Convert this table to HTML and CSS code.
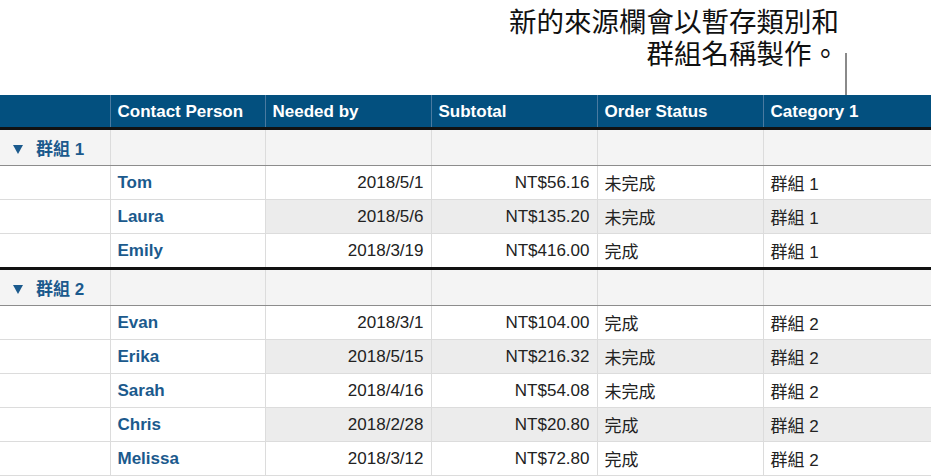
FILE: index.html
```html
<!DOCTYPE html>
<html lang="zh-Hant">

<head>
    <meta charset="UTF-8">
    <meta name="viewport" content="width=device-width, initial-scale=1.0">
    <title>分類表格</title>
    <link rel="stylesheet" href="styles.css">
</head>

<body>
    <div class="callout">
        <p class="callout-text">新的來源欄會以暫存類別和<br>群組名稱製作。</p>
        <div class="callout-line"></div>
    </div>

    <table class="orders">
        <colgroup>
            <col class="col-group">
            <col class="col-contact">
            <col class="col-date">
            <col class="col-subtotal">
            <col class="col-status">
            <col class="col-category">
        </colgroup>
        <thead>
            <tr>
                <th></th>
                <th>Contact Person</th>
                <th>Needed by</th>
                <th>Subtotal</th>
                <th>Order Status</th>
                <th>Category 1</th>
            </tr>
        </thead>
        <tbody>
            <tr class="group-row">
                <td class="group-label"><span class="arrow"></span>群組 1</td>
                <td></td><td></td><td></td><td></td><td></td>
            </tr>
            <tr>
                <td></td><td class="name">Tom</td><td class="num">2018/5/1</td><td class="num">NT$56.16</td><td>未完成</td><td>群組 1</td>
            </tr>
            <tr class="alt">
                <td></td><td class="name">Laura</td><td class="num">2018/5/6</td><td class="num">NT$135.20</td><td>未完成</td><td>群組 1</td>
            </tr>
            <tr class="last">
                <td></td><td class="name">Emily</td><td class="num">2018/3/19</td><td class="num">NT$416.00</td><td>完成</td><td>群組 1</td>
            </tr>
            <tr class="group-row">
                <td class="group-label"><span class="arrow"></span>群組 2</td>
                <td></td><td></td><td></td><td></td><td></td>
            </tr>
            <tr>
                <td></td><td class="name">Evan</td><td class="num">2018/3/1</td><td class="num">NT$104.00</td><td>完成</td><td>群組 2</td>
            </tr>
            <tr class="alt">
                <td></td><td class="name">Erika</td><td class="num">2018/5/15</td><td class="num">NT$216.32</td><td>未完成</td><td>群組 2</td>
            </tr>
            <tr>
                <td></td><td class="name">Sarah</td><td class="num">2018/4/16</td><td class="num">NT$54.08</td><td>未完成</td><td>群組 2</td>
            </tr>
            <tr class="alt">
                <td></td><td class="name">Chris</td><td class="num">2018/2/28</td><td class="num">NT$20.80</td><td>完成</td><td>群組 2</td>
            </tr>
            <tr>
                <td></td><td class="name">Melissa</td><td class="num">2018/3/12</td><td class="num">NT$72.80</td><td>完成</td><td>群組 2</td>
            </tr>
        </tbody>
    </table>
</body>

</html>
```

FILE: styles.css
```css
body {
    margin: 0;
    background-color: #fff;
    font-family: "Liberation Sans", "Noto Sans CJK TC", sans-serif;
    color: #222;
}

/* annotation above the table */
.callout {
    position: relative;
    height: 95px;
}

.callout-text {
    margin: 0;
    width: 839px;
    padding-top: 4px;
    text-align: right;
    font-family: "Noto Sans CJK TC", sans-serif;
    font-size: 27.5px;
    line-height: 32px;
    color: #111;
}

.callout-line {
    position: absolute;
    left: 845px;
    top: 53px;
    width: 2px;
    height: 42px;
    background-color: #8a8a8a;
}

/* table */
.orders {
    border-collapse: collapse;
    table-layout: fixed;
    width: 931px;
    font-size: 17px;
}

.col-group { width: 110px; }
.col-contact { width: 155px; }
.col-date { width: 166px; }
.col-subtotal { width: 166px; }
.col-status { width: 166px; }
.col-category { width: 168px; }

.orders th,
.orders td {
    padding: 0 7px;
    text-align: left;
    white-space: nowrap;
}

.orders th {
    height: 30px;
    padding-top: 2px;
    background-color: #03507f;
    color: #fff;
    font-weight: bold;
    border-left: 1px solid #4a7aa0;
    border-bottom: 3px solid #111;
}

.orders th:first-child {
    border-left: none;
}

.orders td {
    height: 33px;
    border-left: 1px solid #dcdcdc;
    border-bottom: 1px solid #dcdcdc;
}

.orders td:first-child {
    border-left: none;
}

.orders tr.alt td:nth-child(n+3) {
    background-color: #ececec;
}

.orders tr.last td {
    border-bottom: 3px solid #111;
}

.orders tr.group-row td {
    height: 35px;
    background-color: #f4f4f4;
    border-bottom-color: #8c8c8c;
}

.orders td.group-label {
    color: #1b5a8d;
    font-weight: bold;
    padding-left: 13px;
}

.arrow {
    display: inline-block;
    width: 0;
    height: 0;
    border-left: 5px solid transparent;
    border-right: 5px solid transparent;
    border-top: 9px solid #1b5a8d;
    margin-right: 13px;
    vertical-align: 1px;
}

.name {
    color: #1b5a8d;
    font-weight: bold;
}

.orders td.num {
    text-align: right;
}
```
